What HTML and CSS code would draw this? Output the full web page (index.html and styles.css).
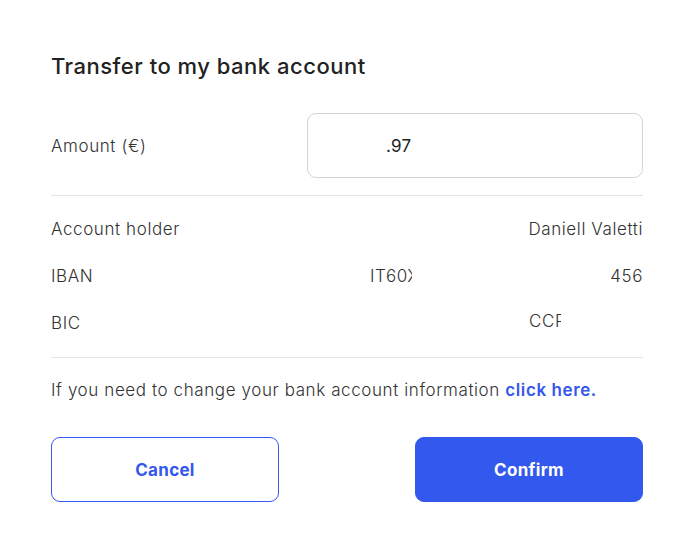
FILE: index.html
```html
<!DOCTYPE html>
<html>
<head>
<meta charset="utf-8" />
<title>Transfer to my bank account</title>
<link rel="stylesheet" href="styles.css">
</head>
<body>
<div class="dialog">
	<h1 class="title">Transfer to my bank account</h1>
	<div class="amount">
		<label class="label">Amount (€)</label>
		<div class="input"><span class="input-val">.97</span></div>
	</div>
	<div class="details">
		<div class="row">
			<span class="label">Account holder</span>
			<span class="val">Daniell Valetti</span>
		</div>
		<div class="row">
			<span class="label">IBAN</span>
			<span class="val iban"><span class="clip iban-a">IT60X</span><span class="iban-b">456</span></span>
		</div>
		<div class="row">
			<span class="label">BIC</span>
			<span class="val bic"><span class="clip bic-a">CCRT</span></span>
		</div>
	</div>
	<p class="note">If you need to change your bank account information <a href="#">click here.</a></p>
	<div class="buttons">
		<button class="btn cancel">Cancel</button>
		<button class="btn confirm">Confirm</button>
	</div>
</div>
</body>
</html>
```
FILE: styles.css
```css
*{ margin:0; padding:0; box-sizing:border-box;}
body{ background:#fff; font-family:Inter, "Liberation Sans", sans-serif; color:#2b2b2b;}
.dialog{ width:679px; padding:51px 36px 0 51px; display:flex; flex-direction:column;}
.title{ font-size:22px; font-weight:500; color:#222; line-height:30px; letter-spacing:0.5px;}
.amount{ display:flex; align-items:center; justify-content:space-between; margin-top:32px; padding-bottom:17px; border-bottom:1px solid #e4e4e4;}
.label{ font-size:17px; color:#333; font-weight:300; letter-spacing:0.6px;}
.input{ width:336px; height:65px; border:1px solid #d5d5d5; border-radius:9px; display:flex; align-items:center; padding-left:78px;}
.input-val{ font-size:17px; color:#222; letter-spacing:0.3px;}
.details{ display:flex; flex-direction:column; gap:25px; padding:22px 0 23px; border-bottom:1px solid #e4e4e4;}
.row{ display:flex; justify-content:space-between; align-items:center; height:22px;}
.val{ font-size:17px; color:#333; font-weight:300; letter-spacing:0.6px; white-space:nowrap;}
.clip{ display:inline-block; overflow:hidden; white-space:nowrap;}
.iban{ width:273px; display:flex; justify-content:space-between;}
.iban-a{ width:42px;}
.bic{ width:114px;}
.bic-a{ width:32px;}
.note{ font-size:17px; color:#333; font-weight:300; letter-spacing:0.6px; margin-top:20px; line-height:24px;}
.note a{ color:#3457ed; font-weight:600; text-decoration:none;}
.buttons{ display:flex; justify-content:space-between; margin-top:35px;}
.btn{ width:228px; height:65px; border-radius:9px; font-family:inherit; font-size:17px; font-weight:700; letter-spacing:0.3px; cursor:pointer;}
.cancel{ background:#fff; border:1px solid #3457ed; color:#3457ed;}
.confirm{ background:#3358ed; border:1px solid #3358ed; color:#fff;}
```
